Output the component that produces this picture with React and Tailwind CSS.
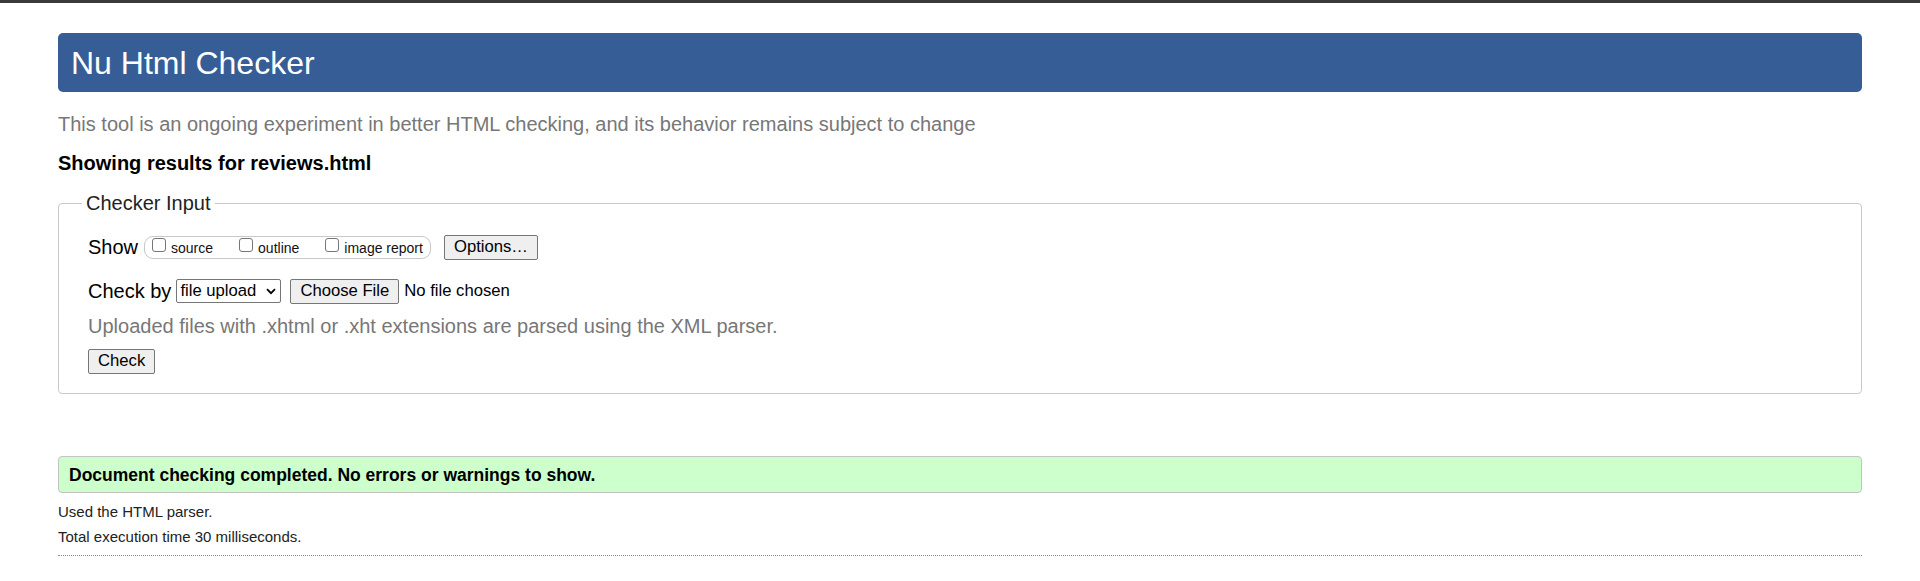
import React from "react";

function Checkbox({ label }) {
  return (
    <label className="flex items-start mr-[26px] last:mr-0">
      <span className="block w-[14px] h-[14px] border border-[#767676] rounded-[3px] bg-white"></span>
      <span className="ml-[5px] mt-[2px] text-[14px] leading-[16px] text-[#111]">
        {label}
      </span>
    </label>
  );
}

function Button({ children }) {
  return (
    <button className="h-[25px] px-[9px] bg-[#efefef] border border-[#767676] rounded-[2px] text-[16.67px] leading-[20px] text-black">
      {children}
    </button>
  );
}

export default function App() {
  return (
    <div className="min-h-[581px] bg-white font-['Liberation_Sans',Arial,sans-serif] text-black">
      <div className="h-[3px] bg-[#3a3a3a]"></div>

      <div className="px-[58px]">
        {/* header */}
        <div className="mt-[30px] h-[59px] flex items-center pl-[13px] bg-[#365d95] rounded-[5px]">
          <h1 className="text-[32px] leading-[36px] text-white">
            Nu Html Checker
          </h1>
        </div>

        <p className="mt-[21px] text-[20px] leading-[23px] text-[#777]">
          This tool is an ongoing experiment in better HTML checking, and its
          behavior remains subject to change
        </p>

        <p className="mt-[16px] text-[20px] leading-[23px] font-bold">
          Showing results for reviews.html
        </p>

        {/* checker input */}
        <fieldset className="mt-[17px] border border-[#c8c8c8] rounded-[4px] pl-[29px] pb-[19px]">
          <legend className="-ml-[6px] px-[4px] text-[20px] leading-[23px] text-[#222]">
            Checker Input
          </legend>

          <div className="mt-[17px] h-[30px] flex items-center">
            <span className="text-[20px] leading-[23px]">Show</span>
            <div className="ml-[6px] h-[23px] flex items-start pl-[7px] pr-[7px] pt-[1px] border border-[#c8c8c8] rounded-[9px]">
              <Checkbox label="source" />
              <Checkbox label="outline" />
              <Checkbox label="image report" />
            </div>
            <div className="ml-[13px]">
              <Button>Options…</Button>
            </div>
          </div>

          <div className="mt-[14px] h-[30px] flex items-center">
            <span className="text-[20px] leading-[23px]">Check by</span>
            <div className="ml-[5px] w-[105px] h-[24px] flex items-center justify-between pl-[3px] pr-[3px] bg-white border border-[#767676] rounded-[2px]">
              <span className="text-[16.67px] leading-[20px]">file upload</span>
              <svg
                width="10"
                height="7"
                viewBox="0 0 10 7"
                className="mr-[1px]"
              >
                <path
                  d="M1 1.2 L5 5.2 L9 1.2"
                  fill="none"
                  stroke="black"
                  strokeWidth="1.8"
                />
              </svg>
            </div>
            <div className="ml-[9px]">
              <Button>Choose File</Button>
            </div>
            <span className="ml-[5px] text-[16.67px] leading-[20px]">
              No file chosen
            </span>
          </div>

          <div className="mt-[8px] h-[24px] flex items-center text-[20px] leading-[23px] text-[#777]">
            Uploaded files with .xhtml or .xht extensions are parsed using the
            XML parser.
          </div>

          <div className="mt-[10px] h-[26px] flex items-center">
            <Button>Check</Button>
          </div>
        </fieldset>

        {/* result */}
        <div className="mt-[62px] h-[37px] flex items-center pl-[10px] bg-[#ccffcc] border border-[#c4c4c4] rounded-[4px]">
          <span className="text-[17.5px] leading-[20px] font-bold">
            Document checking completed. No errors or warnings to show.
          </span>
        </div>

        <p className="mt-[6px] text-[15px] leading-[25px] text-[#222]">
          Used the HTML parser.
        </p>
        <p className="text-[15px] leading-[25px] text-[#222]">
          Total execution time 30 milliseconds.
        </p>

        <div className="mt-[6px] border-t border-dotted border-[#888]"></div>
      </div>
    </div>
  );
}
